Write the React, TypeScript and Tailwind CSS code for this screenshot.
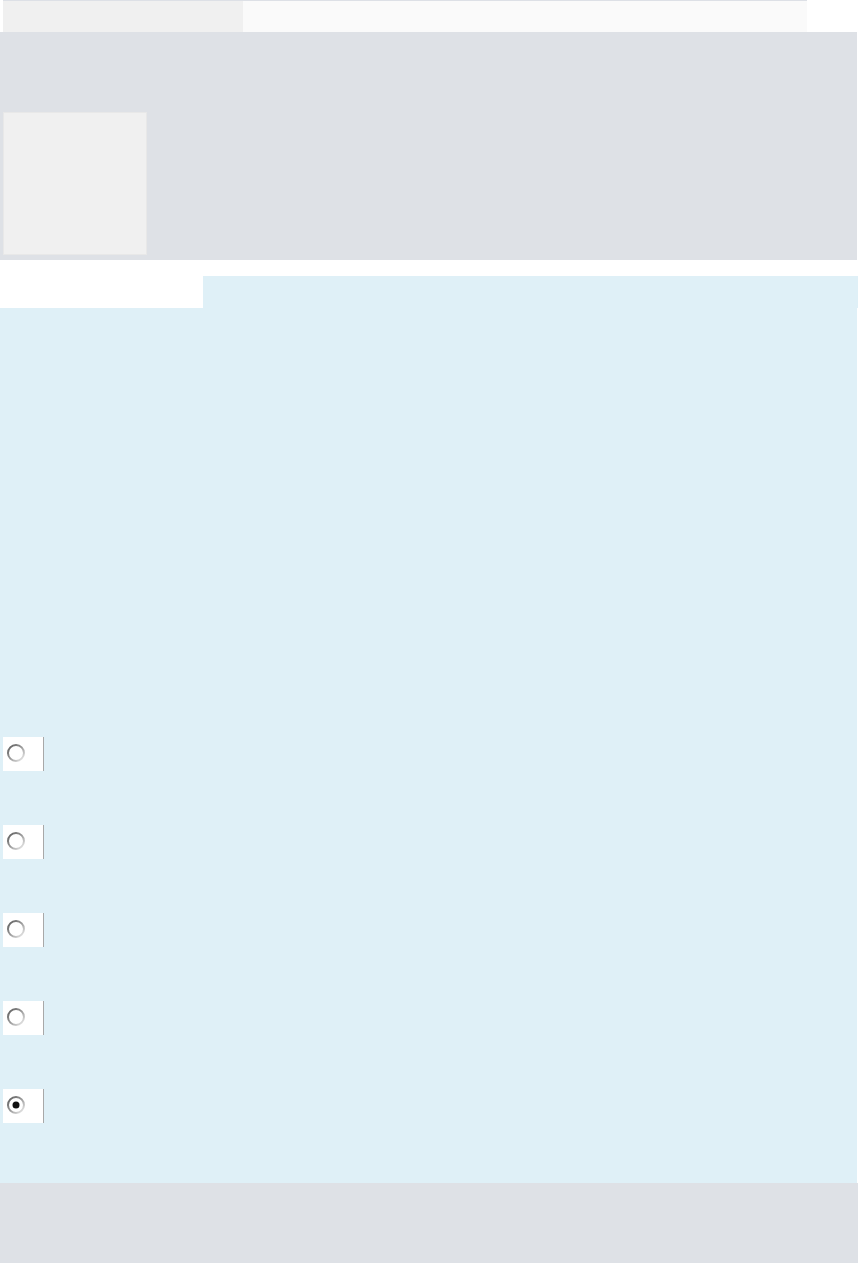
import React from "react";

function Radio({ checked }: { checked?: boolean }) {
  return (
    <div className="w-[41px] h-[34px] bg-white border-r border-[#a8a8a8] pl-[3px] pt-[6px]">
      <svg width="20" height="20" viewBox="0 0 20 20">
        <defs>
          <linearGradient id={checked ? "rg1" : "rg0"} x1="0" y1="0" x2="1" y2="1">
            <stop offset="0" stopColor="#5a5a5a" />
            <stop offset="0.5" stopColor="#9a9a9a" />
            <stop offset="1" stopColor="#f2f2f2" />
          </linearGradient>
        </defs>
        <circle cx="10" cy="10" r="8" fill="#ffffff" stroke={`url(#${checked ? "rg1" : "rg0"})`} strokeWidth="2" />
        {checked && <circle cx="10" cy="10" r="3.5" fill="#111111" />}
      </svg>
    </div>
  );
}

export default function App() {
  return (
    <div className="w-[858px] h-[1263px] bg-white flex flex-col" style={{ fontFamily: "'Liberation Sans', sans-serif" }}>
      <div className="ml-[3px] w-[804px] h-[32px] border-t border-[#dde0e6] flex">
        <div className="w-[240px] bg-[#f0f0f0]" />
        <div className="flex-1 bg-[#fafafa]" />
      </div>
      <div className="w-[857px] h-[228px] bg-[#dee1e6] pt-[80px] pl-[3px]">
        <div className="w-[144px] h-[143px] bg-[#f0f0f0] border border-[#e8e8e8]" />
      </div>
      <div className="h-[16px]" />
      <div className="ml-[203px] h-[32px] bg-[#dff0f7]" />
      <div className="w-[857px] h-[875px] bg-[#dff0f7] pt-[429px] pl-[3px] flex flex-col gap-[54px]">
        <Radio />
        <Radio />
        <Radio />
        <Radio />
        <Radio checked />
      </div>
      <div className="flex-1 bg-[#dee1e6]" />
    </div>
  );
}
